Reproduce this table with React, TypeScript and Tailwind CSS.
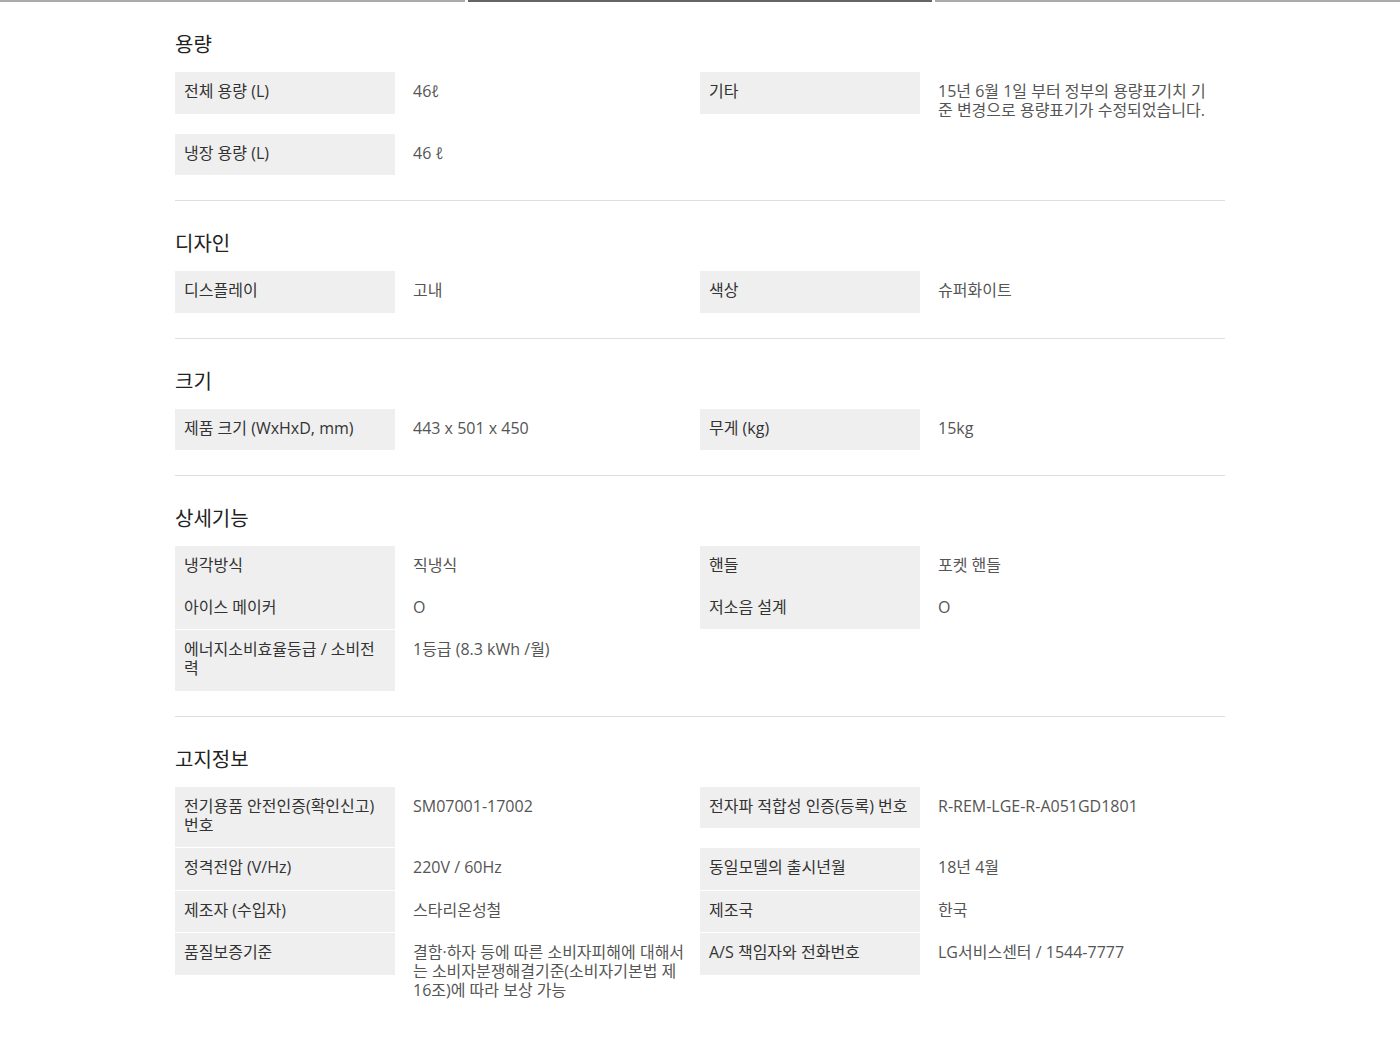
import React from "react";

type Cell = { label: string; value: string };
type Row = { left?: Cell; right?: Cell; join?: boolean };
type Section = { title: string; rows: Row[] };

const SECTIONS: Section[] = [
  {
    title: "용량",
    rows: [
      {
        left: { label: "전체 용량 (L)", value: "46ℓ" },
        right: { label: "기타", value: "15년 6월 1일 부터 정부의 용량표기치 기준 변경으로 용량표기가 수정되었습니다." },
      },
      { left: { label: "냉장 용량 (L)", value: "46 ℓ" } },
    ],
  },
  {
    title: "디자인",
    rows: [{ left: { label: "디스플레이", value: "고내" }, right: { label: "색상", value: "슈퍼화이트" } }],
  },
  {
    title: "크기",
    rows: [
      { left: { label: "제품 크기 (WxHxD, mm)", value: "443 x 501 x 450" }, right: { label: "무게 (kg)", value: "15kg" } },
    ],
  },
  {
    title: "상세기능",
    rows: [
      { left: { label: "냉각방식", value: "직냉식" }, right: { label: "핸들", value: "포켓 핸들" } },
      { left: { label: "아이스 메이커", value: "O" }, right: { label: "저소음 설계", value: "O" }, join: true },
      { left: { label: "에너지소비효율등급 / 소비전력", value: "1등급 (8.3 kWh /월)" } },
    ],
  },
  {
    title: "고지정보",
    rows: [
      {
        left: { label: "전기용품 안전인증(확인신고) 번호", value: "SM07001-17002" },
        right: { label: "전자파 적합성 인증(등록) 번호", value: "R-REM-LGE-R-A051GD1801" },
      },
      { left: { label: "정격전압 (V/Hz)", value: "220V / 60Hz" }, right: { label: "동일모델의 출시년월", value: "18년 4월" } },
      { left: { label: "제조자 (수입자)", value: "스타리온성철" }, right: { label: "제조국", value: "한국" } },
      {
        left: { label: "품질보증기준", value: "결함·하자 등에 따른 소비자피해에 대해서는 소비자분쟁해결기준(소비자기본법 제16조)에 따라 보상 가능" },
        right: { label: "A/S 책임자와 전화번호", value: "LG서비스센터 / 1544-7777" },
      },
    ],
  },
];

function SpecCell({ cell }: { cell?: Cell }) {
  if (!cell) return <div />;
  return (
    <div className="flex items-start">
      <div className="w-[220px] shrink-0 bg-[#efefef] pl-[9px] pr-[8px] pt-[10px] pb-[12.5px] text-[16px] leading-[19px] text-[#333] break-all">
        {cell.label}
      </div>
      <div className="w-[290px] pl-[18px] pt-[10px] pb-[12.5px] text-[16px] leading-[19px] text-[#555] break-all">
        {cell.value}
      </div>
    </div>
  );
}

export default function App() {
  return (
    <div className="min-h-screen bg-white font-['Open_Sans','Noto_Sans_CJK_KR',sans-serif]">
      {/* tab bar */}
      <div className="flex h-[2px] gap-[3px]">
        <div className="flex-1 bg-[#ababab]" />
        <div className="flex-1 bg-[#666]" />
        <div className="flex-1 bg-[#ababab]" />
      </div>

      <div className="w-[1050px] mx-auto">
        {SECTIONS.map((s) => (
          <section key={s.title} className="pt-[29px] pb-[25px] border-b border-[#dedede]">
            <h2 className="text-[20px] leading-[28px] text-[#222] mb-[13px]">{s.title}</h2>
            <div className="flex flex-col gap-px">
              {s.rows.map((r, i) => (
                <div key={i} className={`grid grid-cols-2 ${r.join ? "-mt-px" : ""}`}>
                  <SpecCell cell={r.left} />
                  <SpecCell cell={r.right} />
                </div>
              ))}
            </div>
          </section>
        ))}
      </div>
    </div>
  );
}
